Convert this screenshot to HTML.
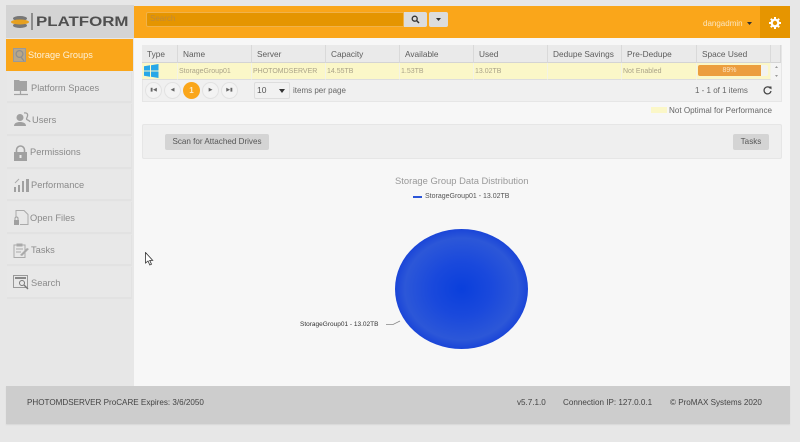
<!DOCTYPE html>
<html><head><meta charset="utf-8">
<style>
html,body{margin:0;padding:0;background:#e7e7e7;}
#p{position:relative;width:800px;height:442px;overflow:hidden;background:#e7e7e7;font-family:"Liberation Sans",sans-serif;color:#666;filter:blur(.35px);}
#p div,#p span.a,#p svg{position:absolute;}
.t{white-space:nowrap;line-height:12px;}
.nav{left:7px;width:125px;background:#e8e8e8;border-right:1px solid #e2e2e2;border-bottom:2px solid #e2e2e2;box-sizing:border-box;}
.nl{font-size:9.3px;color:#8a8a8a;}
.th{top:45px;height:18px;background:#eaeaea;border-right:1px solid #d9d9d9;box-sizing:border-box;font-size:8.3px;color:#5c5c5c;line-height:19px;padding-left:5px;white-space:nowrap;border-bottom:1px solid #d4d4d4;}
.td{top:63px;height:17px;background:#fbf7c8;border-right:1px solid #f3f3e6;box-sizing:border-box;font-size:7px;color:#aaa388;line-height:17px;padding-left:1px;white-space:nowrap;border-bottom:1px solid #ddd;}
.pg{top:82px;width:17px;height:17px;border-radius:50%;background:#f3f3f3;border:1px solid #e2e2e2;box-sizing:border-box;font-size:5px;line-height:15px;text-align:center;color:#666;}
</style></head><body>
<div id="p">
<!-- sidebar logo -->
<div style="left:6px;top:5px;width:128px;height:33px;background:#d4d4d4"></div>
<svg style="left:10px;top:15px" width="20" height="14" viewBox="0 0 20 14"><ellipse cx="10" cy="3.5" rx="7" ry="2.5" fill="#777"/><ellipse cx="10" cy="10.5" rx="7" ry="2.5" fill="#777"/><ellipse cx="10" cy="7" rx="9" ry="2.5" fill="#e6a020"/></svg>
<div style="left:31px;top:13px;width:2px;height:17px;background:#8c8c8c"></div>
<div class="t" style="left:36px;top:15px;font-size:13.5px;line-height:14px;font-weight:bold;color:#4f4f4f;transform-origin:left top;transform:scaleX(1.25)">PLATFORM</div>

<!-- nav -->
<div style="left:6px;top:39px;width:127px;height:32px;background:#faa61a"></div>
<svg style="left:13px;top:48px" width="13" height="14" viewBox="0 0 13 14"><rect x=".5" y=".5" width="12" height="13" fill="#b7a78a" stroke="#999"/><circle cx="6.5" cy="6" r="3.4" fill="none" stroke="#8e8e8e" stroke-width="1.2"/><path d="M8 9l3 4" stroke="#8e8e8e" stroke-width="1.3"/></svg>
<div class="t" style="left:28px;top:49px;font-size:9.2px;color:#fdf1d8">Storage Groups</div>

<div class="nav" style="top:72px;height:31px"></div>
<div class="nav" style="top:104px;height:32px"></div>
<div class="nav" style="top:137px;height:32px"></div>
<div class="nav" style="top:170px;height:31px"></div>
<div class="nav" style="top:202px;height:32px"></div>
<div class="nav" style="top:235px;height:31px"></div>
<div class="nav" style="top:267px;height:32px"></div>

<svg style="left:13px;top:79px" width="16" height="17" viewBox="0 0 16 17"><path d="M1 1h5l1 1h7v10H1z" fill="#a3a3a3"/><path d="M7.500 12v3M1 15.500h14" stroke="#a3a3a3" stroke-width="1.200"/></svg>
<div class="t nl" style="left:31px;top:82px">Platform Spaces</div>
<svg style="left:13px;top:112px" width="18" height="15" viewBox="0 0 18 15"><circle cx="7" cy="5.500" r="3.500" fill="#a0a0a0"/><path d="M1 14c0-3 3-4 6-4s6 1 6 4z" fill="#a0a0a0"/><path d="M11 1c3-.5 4 1 3.500 3 -.3 1.500-1 2-1 3 0 1 3 1 3.500 3" fill="none" stroke="#a0a0a0" stroke-width="1.300"/></svg>
<div class="t nl" style="left:32px;top:114px">Users</div>
<svg style="left:13px;top:145px" width="15" height="16" viewBox="0 0 15 16"><path d="M3.500 7V5a4 4 0 0 1 8 0v2" fill="none" stroke="#a0a0a0" stroke-width="1.600"/><rect x="1" y="7" width="13" height="9" fill="#a0a0a0"/><rect x="6.500" y="10" width="2" height="3" fill="#e8e8e8"/></svg>
<div class="t nl" style="left:30px;top:146px">Permissions</div>
<svg style="left:13px;top:177px" width="17" height="15" viewBox="0 0 17 15"><path d="M1 10h2v5H1zM5 8h2v7H5zM9 4h2v11H9zM13 2h3v13h-3z" fill="#a0a0a0"/><path d="M2 6l4-4" stroke="#aaa"/></svg>
<div class="t nl" style="left:31px;top:179px">Performance</div>
<svg style="left:13px;top:210px" width="16" height="15" viewBox="0 0 16 15"><path d="M3 7V.5h8l4 4v10H7" fill="none" stroke="#aaa"/><rect x="1" y="10" width="5" height="5" fill="#a0a0a0"/><path d="M2 10V8.500a1.500 1.500 0 0 1 3 0V10" fill="none" stroke="#a0a0a0"/></svg>
<div class="t nl" style="left:30px;top:212px">Open Files</div>
<svg style="left:13px;top:243px" width="17" height="15" viewBox="0 0 17 15"><rect x="1" y="2" width="11" height="12.500" fill="none" stroke="#aaa"/><path d="M4 1h5v2H4zM3 6h7M3 9h5" stroke="#aaa" fill="none"/><path d="M7 12l7-7 2 1-7 7z" fill="#aaa"/></svg>
<div class="t nl" style="left:31px;top:244px">Tasks</div>
<svg style="left:13px;top:275px" width="17" height="15" viewBox="0 0 17 15"><rect x=".5" y=".5" width="14" height="12" fill="none" stroke="#999"/><path d="M2 3h11" stroke="#888" stroke-width="2"/><circle cx="9" cy="8" r="2.500" fill="none" stroke="#777"/><path d="M11 10l4 4" stroke="#777" stroke-width="1.300"/></svg>
<div class="t nl" style="left:31px;top:277px">Search</div>

<!-- header -->
<div style="left:134px;top:6px;width:656px;height:32px;background:#faa61a"></div>
<div style="left:146px;top:12px;width:258px;height:15px;background:#e59500;border:1px solid #f0b24a;box-sizing:border-box;border-radius:2px 0 0 2px"></div>
<div class="t" style="left:150px;top:13px;font-size:8px;color:#bf8a3a">Search</div>
<div style="left:404px;top:12px;width:23px;height:15px;background:#dcdcdc;border-radius:0 2px 2px 0"></div>
<svg style="left:411px;top:15px" width="9" height="9" viewBox="0 0 9 9"><circle cx="3.700" cy="3.700" r="2.500" fill="none" stroke="#333" stroke-width="1.300"/><path d="M5.500 5.500L8 8" stroke="#333" stroke-width="1.500"/></svg>
<div style="left:429px;top:12px;width:19px;height:15px;background:#dcdcdc;border-radius:2px"></div>
<svg style="left:436px;top:18px" width="5" height="3" viewBox="0 0 5 3"><path d="M0 0h5L2.500 3z" fill="#333"/></svg>
<div class="t" style="left:703px;top:18px;font-size:8px;color:#fbe6c0">dangadmin</div>
<svg style="left:747px;top:22px" width="5" height="3" viewBox="0 0 5 3"><path d="M0 0h5L2.500 3z" fill="#333"/></svg>
<div style="left:760px;top:6px;width:30px;height:32px;background:#e69500"></div>
<svg style="left:769px;top:17px" width="12" height="12" viewBox="0 0 12 12"><circle cx="6" cy="6" r="3.300" fill="none" stroke="#fff" stroke-width="2.200"/><path d="M6 0v2.500M6 9.500V12M0 6h2.500M9.500 6H12M1.800 1.800l1.800 1.800M8.400 8.400l1.800 1.800M1.800 10.200l1.800-1.800M8.400 3.600l1.800-1.800" stroke="#fff" stroke-width="2"/></svg>

<!-- content -->
<div style="left:134px;top:38px;width:656px;height:348px;background:#f7f7f7"></div>

<!-- grid -->
<div style="left:142px;top:45px;width:640px;height:57px;background:#f0f0f0;border:1px solid #e6e6e6;box-sizing:border-box"></div>
<div class="th" style="left:142px;width:36px">Type</div>
<div class="th" style="left:178px;width:74px">Name</div>
<div class="th" style="left:252px;width:74px">Server</div>
<div class="th" style="left:326px;width:74px">Capacity</div>
<div class="th" style="left:400px;width:74px">Available</div>
<div class="th" style="left:474px;width:74px">Used</div>
<div class="th" style="left:548px;width:74px">Dedupe Savings</div>
<div class="th" style="left:622px;width:75px">Pre-Dedupe</div>
<div class="th" style="left:697px;width:74px">Space Used</div>
<div class="th" style="left:771px;width:10px"></div>

<div class="td" style="left:142px;width:36px"></div>
<div class="td" style="left:178px;width:74px">StorageGroup01</div>
<div class="td" style="left:252px;width:74px">PHOTOMDSERVER</div>
<div class="td" style="left:326px;width:74px">14.55TB</div>
<div class="td" style="left:400px;width:74px">1.53TB</div>
<div class="td" style="left:474px;width:74px">13.02TB</div>
<div class="td" style="left:548px;width:74px"></div>
<div class="td" style="left:622px;width:75px">Not Enabled</div>
<div class="td" style="left:697px;width:74px"></div>
<div style="left:771px;top:63px;width:10px;height:17px;background:#f4f4f4"></div>
<svg style="left:774px;top:65px" width="5" height="13" viewBox="0 0 5 13"><path d="M2.500 1L4 3H1zM2.500 12L1 10h3z" fill="#999"/></svg>
<svg style="left:144px;top:64px" width="15" height="14" viewBox="0 0 15 14"><path d="M0 2.200l6-.9v5.200H0zM7 1.200L14.500 0v6.500H7zM0 7.500h6v5.200l-6-.9zM7 7.500h7.500V14L7 12.800z" fill="#27a7e8"/></svg>
<div style="left:698px;top:65px;width:70px;height:11px;background:#f3f3f0;border-radius:2px"></div>
<div style="left:698px;top:65px;width:63px;height:11px;background:#ec9e3e;border-radius:2px 0 0 2px;font-size:7px;line-height:11px;text-align:center;color:#fbe3c0">89%</div>

<!-- pager -->
<div class="pg" style="left:145px">&#9646;&#9664;</div>
<div class="pg" style="left:164px">&#9664;</div>
<div style="left:183px;top:82px;width:17px;height:17px;border-radius:50%;background:#faa61a;color:#fdebc8;font-size:8px;font-weight:bold;line-height:17px;text-align:center">1</div>
<div class="pg" style="left:202px">&#9654;</div>
<div class="pg" style="left:221px">&#9654;&#9646;</div>
<div style="left:254px;top:82px;width:36px;height:17px;background:#f1f1f1;border:1px solid #ddd;border-radius:2px;box-sizing:border-box"></div>
<div class="t" style="left:257px;top:84px;font-size:8.500px;color:#555">10</div>
<svg style="left:279px;top:89px" width="6" height="4" viewBox="0 0 6 4"><path d="M0 0h6L3 4z" fill="#333"/></svg>
<div class="t" style="left:293px;top:85px;font-size:8px;color:#666">items per page</div>
<div class="t" style="left:695px;top:85px;font-size:8px;color:#666">1 - 1 of 1 items</div>
<svg style="left:763px;top:86px" width="9" height="9" viewBox="0 0 9 9"><path d="M7.500 2.500A3.500 3.500 0 1 0 8 5" fill="none" stroke="#444" stroke-width="1.200"/><path d="M5.500 0.500h3v3z" fill="#444"/></svg>

<div style="left:651px;top:107px;width:16px;height:6px;background:#fbf7c8"></div>
<div class="t" style="left:669px;top:105px;font-size:8.100px;color:#666">Not Optimal for Performance</div>

<!-- toolbar -->
<div style="left:142px;top:124px;width:640px;height:35px;background:#efefef;border:1px solid #e6e6e6;border-radius:2px;box-sizing:border-box"></div>
<div style="left:165px;top:134px;width:104px;height:16px;background:#d4d4d4;border-radius:2px;font-size:8.100px;line-height:16px;text-align:center;color:#555;white-space:nowrap">Scan for Attached Drives</div>
<div style="left:733px;top:134px;width:36px;height:16px;background:#d4d4d4;border-radius:2px;font-size:8.100px;line-height:16px;text-align:center;color:#555">Tasks</div>

<!-- chart -->
<div class="t" style="left:395px;top:175px;font-size:9.400px;color:#999">Storage Group Data Distribution</div>
<div style="left:413px;top:196px;width:9px;height:2px;background:#2a55d8"></div>
<div class="t" style="left:425px;top:191px;font-size:7px;color:#555">StorageGroup01 - 13.02TB</div>
<svg style="left:390px;top:225px" width="144" height="128" viewBox="0 0 144 128"><defs><radialGradient id="g" cx="50%" cy="50%" r="50%"><stop offset="0" stop-color="#0a3fdc"/><stop offset=".45" stop-color="#1a49dc"/><stop offset=".85" stop-color="#2c57d8"/><stop offset="1" stop-color="#1a45d8"/></radialGradient></defs><ellipse cx="71.500" cy="64" rx="66.500" ry="60" fill="url(#g)"/></svg>
<div class="t" style="left:300px;top:319px;font-size:6.500px;color:#333">StorageGroup01 - 13.02TB</div>
<svg style="left:385px;top:319px" width="16" height="7" viewBox="0 0 16 7"><path d="M1 5.500h7L15 2" fill="none" stroke="#888" stroke-width=".8"/></svg>

<!-- cursor -->
<svg style="left:145px;top:252px" width="9" height="14" viewBox="0 0 9 14"><path d="M.5.500v10.500l2.500-2 1.800 4 1.700-.8-1.800-3.800h3z" fill="#fff" stroke="#333" stroke-width=".8"/></svg>

<!-- footer -->
<div style="left:6px;top:386px;width:784px;height:38px;background:#cdcdcd;box-shadow:0 1px 1px #d8d8d8"></div>
<div class="t" style="left:27px;top:397px;font-size:8.100px;color:#444">PHOTOMDSERVER ProCARE Expires: 3/6/2050</div>
<div class="t" style="left:517px;top:397px;font-size:8.100px;color:#444">v5.7.1.0</div>
<div class="t" style="left:563px;top:397px;font-size:8.100px;color:#444">Connection IP: 127.0.0.1</div>
<div class="t" style="left:670px;top:397px;font-size:8.100px;color:#444">© ProMAX Systems 2020</div>
</div>
</body></html>
